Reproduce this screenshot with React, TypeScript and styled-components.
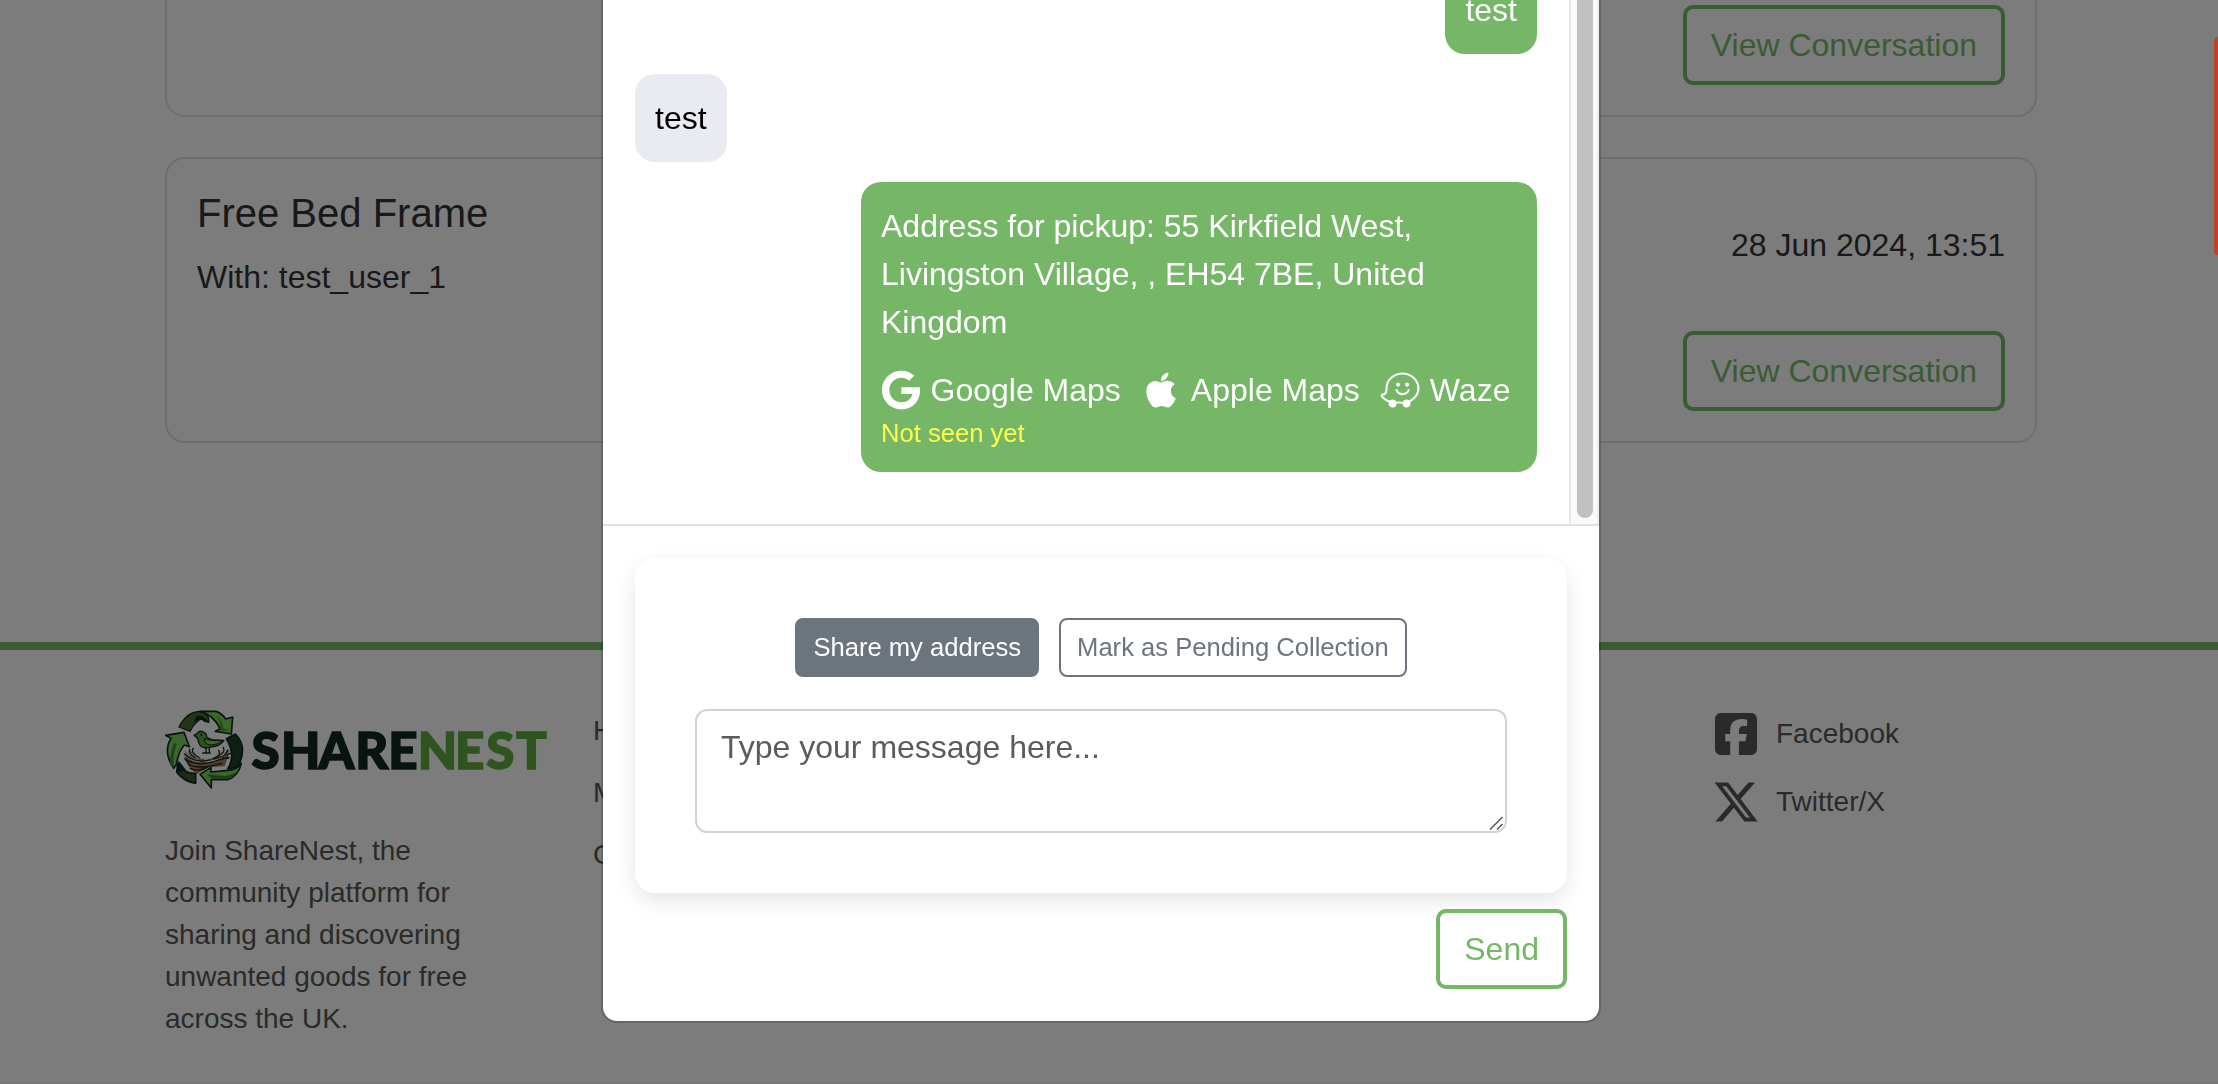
import React from "react";
import styled, { createGlobalStyle } from "styled-components";
import { FaApple, FaGoogle, FaWaze } from "react-icons/fa";
import { FaSquareFacebook, FaXTwitter } from "react-icons/fa6";

const GREEN = "#75b667";

const GlobalStyle = createGlobalStyle`
  *, *::before, *::after { box-sizing: border-box; }
  body {
    margin: 0;
    background: #f9f9f9;
    color: #333;
    font: 32px/48px "Liberation Sans", Arial, sans-serif;
    overflow: hidden;
  }
`;

const Page = styled.div`
  height: 1084px;
  display: flex;
  flex-direction: column;
  overflow: hidden;
`;

const Container = styled.div`
  width: 1872px;
  margin-left: 165px;
`;

const ConversationList = styled(Container)`
  height: 443px;
  flex: none;
  display: flex;
  flex-direction: column;
  justify-content: flex-end;
  gap: 40px;
`;

const Card = styled.article`
  height: 286px;
  flex: none;
  display: flex;
  justify-content: space-between;
  padding: 30px;
  border: 2px solid #ddd;
  border-radius: 20px;
`;

const CardTitle = styled.h5`
  margin: 0 0 16px;
  font-size: 40px;
  line-height: 48px;
  font-weight: 400;
`;

const CardText = styled.p`
  margin: 0;
`;

const CardAside = styled.div`
  display: flex;
  flex-direction: column;
  justify-content: space-between;
  align-items: flex-end;
  padding-top: 32px;
`;

const OutlineButton = styled.button`
  height: 80px;
  margin-top: auto;
  padding: 12px 24px;
  border: 4px solid ${GREEN};
  border-radius: 10px;
  background: transparent;
  color: ${GREEN};
  font: inherit;
  white-space: nowrap;
`;

const Footer = styled.footer`
  flex: 1;
  margin-top: 199px;
  border-top: 8px solid ${GREEN};
  border-bottom: 1px solid #efe9ee;
  color: #555;
  font-size: 28px;
  line-height: 42px;
`;

const FooterColumns = styled(Container)`
  display: grid;
  grid-template-columns: 428px 1119px 1fr;
  padding-top: 60px;
`;

const Brand = styled.div`
  display: flex;
  align-items: center;
  height: 80px;
  margin-bottom: 40px;
`;

const BrandMark = styled.svg`
  width: 80px;
  height: 80px;
  flex: none;
`;

const Wordmark = styled.svg`
  width: 300px;
  height: 80px;
  margin-left: 6px;
  font: 900 51px Lato, sans-serif;
`;

const About = styled.p`
  width: 340px;
  margin: 0;
`;

const FooterLinks = styled.nav`
  display: flex;
  flex-direction: column;
  gap: 20px;
`;

const SocialLinks = styled(FooterLinks)``;

const SocialLink = styled.span`
  display: flex;
  align-items: center;
  gap: 16px;
  height: 48px;
  svg {
    width: 48px;
    height: 48px;
  }
`;

const Backdrop = styled.div`
  position: fixed;
  inset: 0;
  background: rgba(0, 0, 0, 0.5);
  padding-right: 16px;
  display: flex;
  justify-content: center;
  align-items: flex-start;
`;

const Dialog = styled.section`
  width: 1000px;
  height: 1023px;
  display: flex;
  flex-direction: column;
  border: 2px solid rgba(0, 0, 0, 0.175);
  border-top: 0;
  border-radius: 0 0 16px 16px;
  background: #fff;
  background-clip: padding-box;
`;

const Scroller = styled.div`
  height: 526px;
  flex: none;
  display: flex;
  overflow: hidden;
  border-bottom: 2px solid #dee2e6;
`;

const Messages = styled.div`
  flex: 1;
  display: flex;
  flex-direction: column;
  justify-content: flex-end;
  gap: 20px;
  padding: 0 32px 52px;
`;

const Bubble = styled.div<{ $mine?: boolean }>`
  flex: none;
  align-self: ${(p) => (p.$mine ? "flex-end" : "flex-start")};
  max-width: 676px;
  padding: 20px;
  border-radius: 20px;
  background: ${(p) => (p.$mine ? GREEN : "#e9ebf0")};
  color: ${(p) => (p.$mine ? "#fff" : "#000")};
`;

const MapLinks = styled.div`
  display: flex;
  gap: 20.5px;
  height: 48px;
  margin: 19.6px 0 0;
`;

const MapLink = styled.span`
  display: flex;
  align-items: center;
  gap: 9.5px;
  white-space: nowrap;
  svg {
    width: 40px;
    height: 40px;
    flex: none;
  }
`;

const Receipt = styled.div`
  color: #ffff4d;
  font-size: 25.6px;
  line-height: 38.4px;
`;

const Track = styled.div`
  width: 30px;
  flex: none;
  display: flex;
  justify-content: center;
  padding: 0 0 6px 2px;
  border-left: 2px solid #e8e8e8;
  border-right: 2px solid #eee;
  background: #fafafa;
`;

const Thumb = styled.div`
  width: 16px;
  border-radius: 0 0 8px 8px;
  background: #c1c1c1;
`;

const DialogFooter = styled.div`
  flex: 1;
  display: flex;
  flex-direction: column;
  align-items: flex-end;
  padding: 32px;
`;

const Composer = styled.div`
  width: 932px;
  height: 335px;
  display: flex;
  flex-direction: column;
  justify-content: space-between;
  padding: 60px;
  border-radius: 20px;
  background: #fff;
  box-shadow: 0 8px 20px rgba(0, 0, 0, 0.1);
`;

const Actions = styled.div`
  display: flex;
  justify-content: center;
  gap: 20px;
`;

const SmallButton = styled.button<{ $filled?: boolean }>`
  height: 59px;
  padding: 8px 16px;
  border: 2px solid #6c757d;
  border-radius: 8px;
  background: ${(p) => (p.$filled ? "#6c757d" : "transparent")};
  color: ${(p) => (p.$filled ? "#fff" : "#6c757d")};
  font: 25.6px/38.4px "Liberation Sans", Arial, sans-serif;
  white-space: nowrap;
`;

const Field = styled.div`
  position: relative;
  display: flex;
  height: 124px;
`;

const Input = styled.textarea`
  width: 100%;
  padding: 12px 24px;
  border: 2px solid #ced4da;
  border-radius: 12px;
  background: #fff;
  color: #212529;
  font: inherit;
  resize: none;
  overflow: hidden;
  outline: none;
  &::placeholder {
    color: #595c5f;
    opacity: 1;
  }
`;

const ResizeGrip = styled.svg`
  position: absolute;
  right: 3px;
  bottom: 2px;
  width: 16px;
  height: 16px;
`;

const Send = styled(OutlineButton)`
  margin-top: 16px;
`;

const SideTab = styled.div`
  position: fixed;
  top: 37px;
  right: 0;
  width: 4px;
  height: 218px;
  border-radius: 4px 0 0 4px;
  background: #c04222;
`;

function Logo() {
  const dark = "#10281f";
  const green = "#79cf55";
  return (
    <Brand>
      <BrandMark viewBox="15 18 240 240">
        <g strokeLinejoin="round" strokeLinecap="round">
          <g stroke="#fff" strokeOpacity=".25" strokeWidth="12" fill="none">
            <path d="M57 69Q84 20 121 22H169L198 44L218 39L215 90L167 83L180 74L160 62L132 48L92 82Z" />
            <path d="M196 94L226 88Q265 130 238 188Q222 215 178 229L153 252L120 211L152 190V201L195 195Q225 160 196 94Z" />
            <path d="M72 85L88 128L75 127Q45 176 105 209V238Q60 230 33 183Q12 145 28 111L16 94Z" />
          </g>
          <path fill="#476c2e" stroke={dark} strokeWidth="4" d="M57 69Q79 24 119 22Q148 24 146 55L130 42Q105 52 90 82Z" />
          <path fill={dark} d="M109 37Q130 30 145 56L133 54Q119 39 100 58Z" />
          <path fill={green} stroke={dark} strokeWidth="5" d="M119 22H169Q185 27 197 45L218 39L214 90L166 82L180 74Q163 34 119 22Z" />
          <path fill="#4c9235" d="M166 33Q188 48 190 73L209 80L180 80Q188 56 166 33Z" />
          <path fill="#203e28" stroke={dark} strokeWidth="5" d="M199 104L226 90Q262 124 238 181Q227 192 203 194Q229 155 199 104Z" />
          <path fill={green} stroke={dark} strokeWidth="5" d="M120 211L153 190V204L204 199Q230 198 244 178Q236 215 204 227H154V252Z" />
          <path fill="#3d7d33" d="M139 211L157 224H202Q225 217 236 199Q220 213 194 216Z" />
          <path fill={green} stroke={dark} strokeWidth="5" d="M16 94L72 85L88 128L73 123Q55 143 49 182L41 193Q8 143 33 103Z" />
          <path fill="#438436" d="M31 183Q27 150 43 116L51 120Q37 147 42 190Z" />
          <path fill="#38572e" stroke={dark} strokeWidth="5" d="M53 180Q74 210 107 208V238Q74 235 50 205Z" />
          <path fill={dark} d="M56 170L78 198L54 205Q47 190 56 170Z" />
          <path fill="#a57b52" d="M74 151Q100 182 130 172Q166 188 207 148L194 187L145 190L112 209Q79 194 74 151Z" />
          <g fill="none" stroke={dark} strokeWidth="4">
            <path d="M73 149Q105 179 148 168T211 148M80 167Q111 189 164 172T204 163M88 183Q118 197 186 178M90 136Q82 146 105 161M100 133Q90 146 119 162M190 130Q198 150 162 162M176 139Q185 153 160 164M91 194Q119 205 146 187M74 163L90 184M204 138L189 160" />
          </g>
          <g fill="none" stroke="#8d6848" strokeWidth="3">
            <path d="M76 143Q98 171 132 166M207 143Q179 171 147 166M91 142L111 160M192 139L173 160" />
          </g>
          <path fill="#57a23f" stroke={dark} strokeWidth="4" d="M102 94L111 89Q116 78 131 84Q141 88 140 100L155 107L192 109Q178 128 153 129Q122 139 115 112Q115 101 102 94Z" />
          <path fill={green} stroke={dark} strokeWidth="3" d="M133 105Q149 111 190 110Q173 123 151 123Q134 122 133 105Z" />
          <path fill="none" stroke={dark} strokeWidth="4" d="M136 130L139 146M148 130V145M128 147H151" />
          <circle cx="124" cy="92" r="3" fill={dark} />
        </g>
      </BrandMark>
      <Wordmark>
        <text x="0.5 30 67.5 104.3 137.3" y="59" fill="#10281e" stroke="#10281e" strokeWidth="1.6">
          SHARE
        </text>
        <text x="166.7 204 235.3 265" y="59" fill="#60a83e" stroke="#60a83e" strokeWidth="1.6">
          NEST
        </text>
      </Wordmark>
    </Brand>
  );
}

export default function App() {
  return (
    <>
      <GlobalStyle />
      <Page>
        <ConversationList>
          <Card>
            <div />
            <CardAside>
              <OutlineButton>View Conversation</OutlineButton>
            </CardAside>
          </Card>
          <Card>
            <div>
              <CardTitle>Free Bed Frame</CardTitle>
              <CardText>With: test_user_1</CardText>
            </div>
            <CardAside>
              <CardText>28 Jun 2024, 13:51</CardText>
              <OutlineButton>View Conversation</OutlineButton>
            </CardAside>
          </Card>
        </ConversationList>
        <Footer>
          <FooterColumns>
            <div>
              <Logo />
              <About>
                Join ShareNest, the community platform for sharing and discovering unwanted goods for free across the
                UK.
              </About>
            </div>
            <FooterLinks>
              <span>Home</span>
              <span>Messages</span>
              <span>Contact</span>
            </FooterLinks>
            <SocialLinks>
              <SocialLink>
                <FaSquareFacebook />
                Facebook
              </SocialLink>
              <SocialLink>
                <FaXTwitter />
                Twitter/X
              </SocialLink>
            </SocialLinks>
          </FooterColumns>
        </Footer>
      </Page>
      <Backdrop>
        <Dialog>
          <Scroller>
            <Messages>
              <Bubble $mine>test</Bubble>
              <Bubble>test</Bubble>
              <Bubble $mine>
                Address for pickup: 55 Kirkfield West, Livingston Village, , EH54 7BE, United Kingdom
                <MapLinks>
                  <MapLink>
                    <FaGoogle />
                    Google Maps
                  </MapLink>
                  <MapLink>
                    <FaApple />
                    Apple Maps
                  </MapLink>
                  <MapLink>
                    <FaWaze />
                    Waze
                  </MapLink>
                </MapLinks>
                <Receipt>Not seen yet</Receipt>
              </Bubble>
            </Messages>
            <Track>
              <Thumb />
            </Track>
          </Scroller>
          <DialogFooter>
            <Composer>
              <Actions>
                <SmallButton $filled>Share my address</SmallButton>
                <SmallButton>Mark as Pending Collection</SmallButton>
              </Actions>
              <Field>
                <Input placeholder="Type your message here..." />
                <ResizeGrip viewBox="0 0 16 16">
                  <path d="M2 14.5L14.5 2M9 14.5L14.5 9" stroke="#555" strokeWidth="1.5" fill="none" />
                </ResizeGrip>
              </Field>
            </Composer>
            <Send>Send</Send>
          </DialogFooter>
        </Dialog>
      </Backdrop>
      <SideTab />
    </>
  );
}
